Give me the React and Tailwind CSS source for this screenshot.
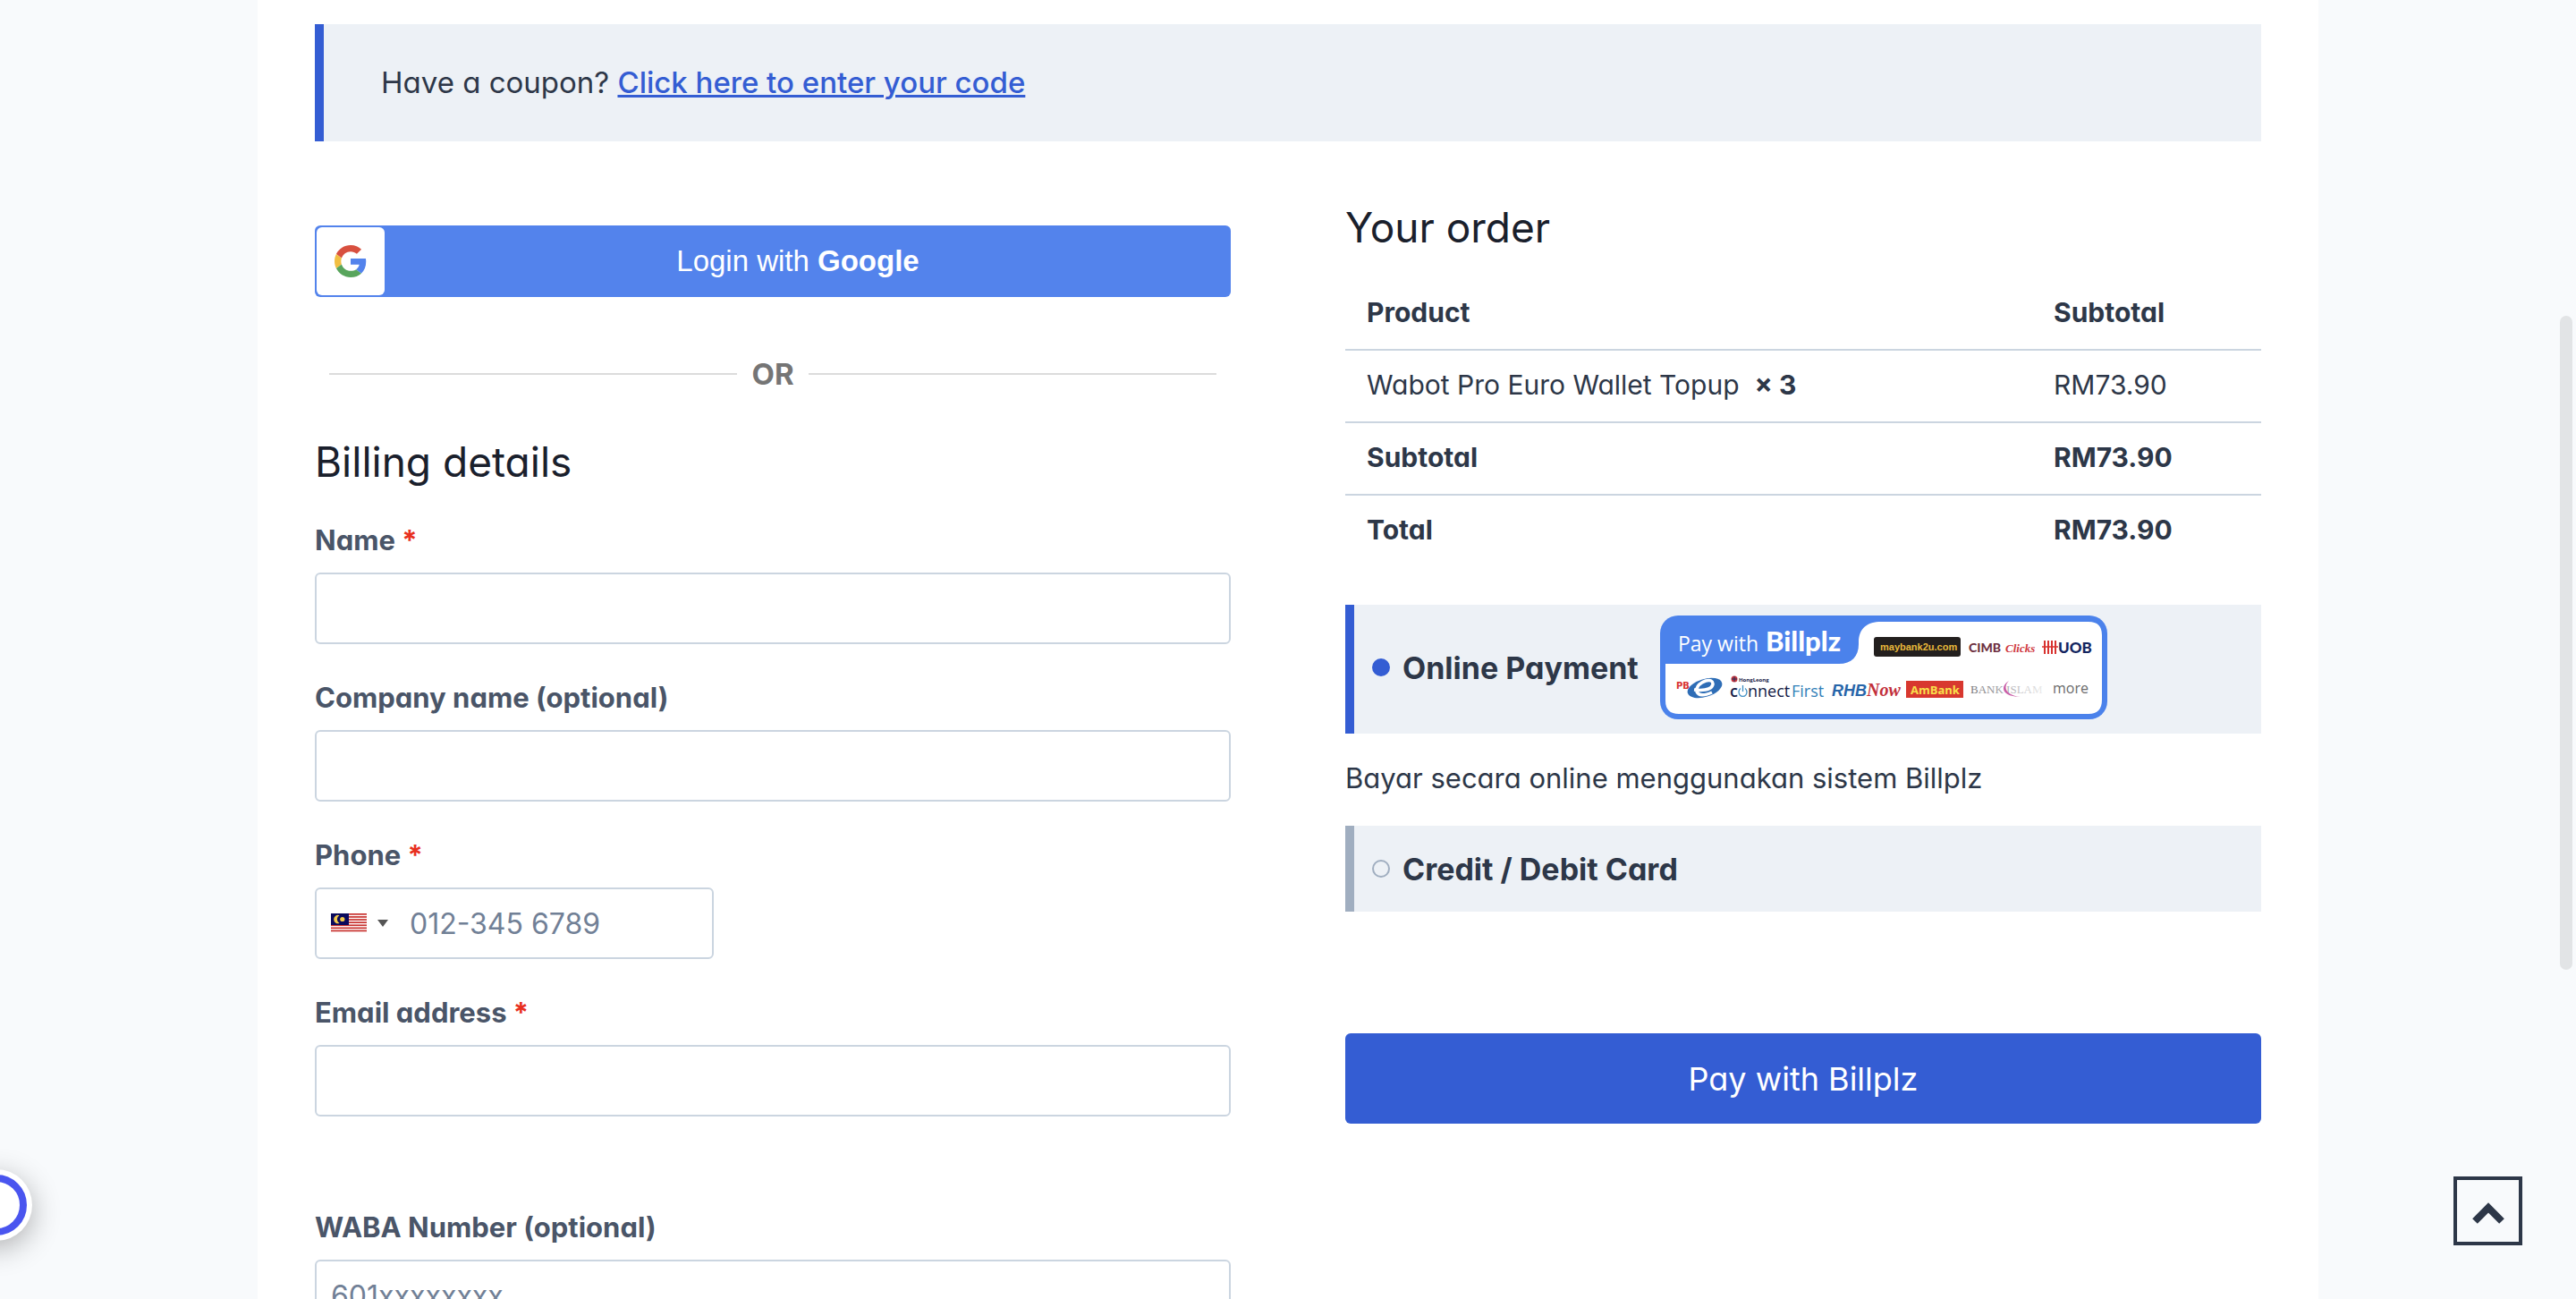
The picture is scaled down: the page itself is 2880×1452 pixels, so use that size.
import React from "react";

const GoogleIcon = () => (
  <svg viewBox="0 0 48 48" className="w-9 h-9" aria-hidden="true">
    <path fill="#d8503f" d="M24 9.5c3.54 0 6.71 1.22 9.21 3.6l6.85-6.85C35.9 2.38 30.47 0 24 0 14.62 0 6.51 5.38 2.56 13.22l7.98 6.19C12.43 13.72 17.74 9.5 24 9.5z" />
    <path fill="#5383ec" d="M46.98 24.55c0-1.57-.15-3.09-.38-4.55H24v9.02h12.94c-.58 2.96-2.26 5.48-4.78 7.18l7.73 6c4.51-4.18 7.09-10.36 7.09-17.65z" />
    <path fill="#f1be42" d="M10.53 28.59c-.48-1.45-.76-2.99-.76-4.59s.27-3.14.76-4.59l-7.98-6.19C.92 16.46 0 20.12 0 24c0 3.88.92 7.54 2.56 10.78l7.97-6.19z" />
    <path fill="#58a55c" d="M24 48c6.48 0 11.93-2.13 15.89-5.81l-7.73-6c-2.15 1.45-4.92 2.3-8.16 2.3-6.26 0-11.57-4.22-13.47-9.91l-7.98 6.19C6.51 42.62 14.62 48 24 48z" />
  </svg>
);

const MalaysiaFlag = () => (
  <svg viewBox="0 0 40 22" className="w-10 h-[22px]" aria-hidden="true">
    <rect width="40" height="22" fill="#fff" />
    {[0, 1, 2, 3, 4, 5, 6].map((i) => (
      <rect key={i} y={i * 3.1} width="40" height="1.7" fill="#c8322f" />
    ))}
    <rect width="20" height="13" fill="#0a0a5c" />
    <path d="M9.500 2.200a4.700 4.700 0 1 0 0 8.800 5 5 0 0 1 0-8.800z" fill="#f2c94c" />
    <circle cx="12.800" cy="6.500" r="2.600" fill="#f2c94c" />
  </svg>
);

// Banner with the Billplz tab and the supported banks
const BillplzBanner = () => (
  <svg viewBox="0 0 500 116" className="w-[500px] h-[116px] shrink-0 font-normal" role="img" aria-label="Pay with Billplz">
    <defs>
      <linearGradient id="islam" x1="0" x2="1">
        <stop offset="0" stopColor="#77777b" />
        <stop offset="0.6" stopColor="#b9b9bd" />
        <stop offset="1" stopColor="#ececec" />
      </linearGradient>
    </defs>
    <rect width="500" height="116" rx="20" fill="#4b82eb" />
    <path d="M6 54H200C214 54 222 46 222 32V30C222 14 232 7 247 7H479Q494 7 494 22V94Q494 110 479 110H21Q6 110 6 95Z" fill="#fff" />

    <text x="20" y="40" fontFamily="Open Sans" fontSize="23" fill="#fff">Pay with</text>
    <text x="118" y="40" fontFamily="Lato" fontSize="31" fontWeight="900" fill="#fff">Billplz</text>

    <rect x="239" y="24" width="97" height="22" rx="3" fill="#231f1e" />
    <text x="246" y="39" fontFamily="Liberation Sans" fontSize="11" fontWeight="700" fill="#e9b93a">maybank2u.com</text>

    <text x="345" y="41" fontFamily="Lato" fontSize="14" fontWeight="900" fill="#6d2f40">CIMB</text>
    <text x="386" y="41" fontFamily="Liberation Serif" fontSize="13" fontWeight="700" fontStyle="italic" fill="#cf3a3f">Clicks</text>

    <path d="M430 28V43M434 28V43M438 28V43M442 28V43" stroke="#d8322f" strokeWidth="2" />
    <path d="M427 35H445" stroke="#d8322f" strokeWidth="1.500" />
    <text x="445" y="42" fontFamily="Lato" fontSize="17" fontWeight="900" fill="#14255f">UOB</text>

    <ellipse cx="50" cy="81" rx="20" ry="10" transform="rotate(-17 50 81)" fill="#2e6db6" />
    <path d="M38 83Q57 85 59 77Q59 71 51 73Q40 77 41 85Q44 92 58 86" fill="none" stroke="#fff" strokeWidth="3.5" />
    <text x="18" y="82" fontFamily="DejaVu Sans" fontSize="10" fontWeight="700" fill="#d8322f">PB</text>

    <circle cx="83" cy="71" r="3.5" fill="#c9343c" />
    <path d="M80 71H86M83 68V74" stroke="#22315c" strokeWidth="1" />
    <text x="88" y="74" fontFamily="Open Sans" fontSize="6" fontWeight="700" fill="#1a2348">HongLeong</text>
    <text x="78" y="91" fontFamily="Open Sans" fontSize="18" fontWeight="600" fill="#141c46">c</text>
    <path d="M90 81.500A4.500 4.900 0 1 0 95 81.500M92.500 78V85" fill="none" stroke="#3f8fc4" strokeWidth="1.300" />
    <text x="98" y="91" fontFamily="Open Sans" fontSize="18" fill="#141c46">nnect</text>
    <text x="147" y="91" fontFamily="Open Sans" fontSize="18" fill="#3180b8">First</text>

    <text x="192" y="90" fontFamily="Liberation Sans" fontSize="18" fontWeight="700" fontStyle="italic" fill="#2765a9">RHB</text>
    <text x="231" y="90" fontFamily="Liberation Serif" fontSize="20" fontWeight="700" fontStyle="italic" fill="#c22f3a">Now</text>

    <rect x="275" y="73" width="64" height="19" fill="#d8382f" />
    <text x="280" y="88" fontFamily="Open Sans" fontSize="13" fontWeight="700" fill="#f8e04b">AmBank</text>

    <text x="347" y="87" fontFamily="Liberation Serif" fontSize="13" fill="url(#islam)">BANK ISLAM</text>
    <path d="M390 73C380 79 381 91 403 91C386 89 383 80 390 73Z" fill="#c95fa8" />

    <text x="439" y="87" fontFamily="Open Sans" fontSize="16" fill="#6b6b6b">more</text>
  </svg>
);

const Field = ({ id, label, required, type = "text", placeholder }) => (
  <div>
    <label htmlFor={id} className="block mb-4 text-[31px] leading-10 font-bold text-[#4a5568]">
      {label}
      {required && <span className="text-[#e8301f]"> *</span>}
    </label>
    <input
      id={id}
      type={type}
      placeholder={placeholder}
      className="block w-full h-20 px-4 bg-white border-2 border-[#cbd5e0] rounded-md text-[32px] placeholder:text-[#718096] outline-none"
    />
  </div>
);

const PhoneField = () => (
  <div>
    <label htmlFor="phone" className="block mb-4 text-[31px] leading-10 font-bold text-[#4a5568]">
      Phone<span className="text-[#e8301f]"> *</span>
    </label>
    <div className="flex items-center w-[446px] h-20 bg-white border-2 border-[#cbd5e0] rounded-md">
      <div className="relative flex items-center gap-3 h-full pl-4 pr-2">
        <MalaysiaFlag />
        <svg viewBox="0 0 12 8" className="w-3 h-2" aria-hidden="true">
          <path d="M0 0h12L6 8z" fill="#555" />
        </svg>
        <select aria-label="Country" defaultValue="MY" className="absolute inset-0 opacity-0">
          <option value="MY">Malaysia</option>
        </select>
      </div>
      <input
        id="phone"
        type="tel"
        placeholder="012-345 6789"
        className="flex-1 min-w-0 h-full pl-4 text-[32px] placeholder:text-[#718096] outline-none"
      />
    </div>
  </div>
);

const Billing = () => (
  <section className="pt-[26px]">
    <button className="flex items-center w-full h-20 p-0.5 bg-[#5383ec] rounded-md text-white">
      <span className="flex items-center justify-center w-[76px] h-full bg-white rounded-md">
        <GoogleIcon />
      </span>
      <span className="flex-1 pr-5 text-center text-[33px] font-['Liberation_Sans',sans-serif]">
        Login with <strong>Google</strong>
      </span>
    </button>

    <div className="flex items-center gap-4 mt-[62px] px-4 leading-[48px] text-[33px] font-bold text-[#757575]">
      <span className="flex-1 h-0.5 bg-[#dcdcdc]" />
      OR
      <span className="flex-1 h-0.5 bg-[#dcdcdc]" />
    </div>

    <h3 className="mt-[46px] text-[46px] leading-[56px] text-[#1a202c]">Billing details</h3>

    <div className="flex flex-col gap-10 mt-10">
      <Field id="name" label="Name" required />
      <Field id="company" label="Company name (optional)" />
      <PhoneField />
      <Field id="email" label="Email address" type="email" required />
    </div>
    <div className="mt-[104px]">
      <Field id="waba" label="WABA Number (optional)" placeholder="601xxxxxxxx" />
    </div>
  </section>
);

const OrderTable = () => (
  <table className="w-full mt-[29px] table-fixed text-left text-[30px] leading-10 [&_td]:px-6 [&_td]:pt-[18px] [&_td]:pb-[21px] [&_th]:px-6 [&_th]:pt-[18px] [&_th]:pb-[21px]">
    <thead>
      <tr className="border-b-2 border-[#cbd5e0]">
        <th className="w-3/4">Product</th>
        <th>Subtotal</th>
      </tr>
    </thead>
    <tbody>
      <tr className="border-b-2 border-[#cbd5e0]">
        <td>
          Wabot Pro Euro Wallet Topup&nbsp; <strong>× 3</strong>
        </td>
        <td>RM73.90</td>
      </tr>
    </tbody>
    <tfoot>
      <tr className="border-b-2 border-[#cbd5e0]">
        <th>Subtotal</th>
        <td className="font-bold">RM73.90</td>
      </tr>
      <tr>
        <th>Total</th>
        <td className="font-bold">RM73.90</td>
      </tr>
    </tfoot>
  </table>
);

const radioClass =
  "appearance-none shrink-0 w-5 h-5 rounded-full border-2 border-[#a0aec0] checked:border-[#345dd3] checked:bg-[#345dd3]";

const Order = () => (
  <section>
    <h3 className="text-[46px] leading-[56px] text-[#1a202c]">Your order</h3>
    <OrderTable />

    <div className="flex items-center h-36 mt-[43px] pl-5 pb-1 bg-[#edf1f6] border-l-[10px] border-[#345dd3]">
      <input id="pay-billplz" type="radio" name="payment" defaultChecked className={radioClass} />
      <label htmlFor="pay-billplz" className="flex items-center gap-6 pl-3.5 text-[34px] font-bold">
        Online Payment
        <BillplzBanner />
      </label>
    </div>
    <p className="mt-[30px] mb-[33px] text-[31px] leading-10">Bayar secara online menggunakan sistem Billplz</p>
    <div className="flex items-center h-24 pl-5 bg-[#edf1f6] border-l-[10px] border-[#a0aec0]">
      <input id="pay-card" type="radio" name="payment" className={radioClass} />
      <label htmlFor="pay-card" className="pl-3.5 text-[34px] font-bold">
        Credit / Debit Card
      </label>
    </div>

    <button className="block w-full h-[101px] mt-34 bg-[#345dd3] rounded-md text-white text-[36px]">
      Pay with Billplz
    </button>
  </section>
);

const App = () => (
  <div className="h-screen overflow-y-auto [scrollbar-width:none] bg-[#f8fafc] text-[#2d3748] font-[Inter,sans-serif] [font-feature-settings:'cv11']">
    <main className="w-4/5 mx-auto px-16 pt-[27px] pb-20 bg-white">
      <div className="flex items-center h-[131px] pl-16 bg-[#edf1f6] border-l-[10px] border-[#345dd3] text-[33px]">
        <p>
          Have a coupon?{" "}
          <a href="#coupon" className="font-medium text-[#345dd3] underline decoration-3">
            Click here to enter your code
          </a>
        </p>
      </div>

      <div className="grid grid-cols-2 gap-32 mt-17">
        <Billing />
        <Order />
      </div>
    </main>

    {/* Widget launcher, half off screen */}
    <button
      aria-label="Open widget"
      className="fixed -left-11 bottom-[65px] flex items-center justify-center w-20 h-20 rounded-full bg-white shadow-[0_8px_32px_rgba(0,0,0,0.3)]"
    >
      <span className="w-[68px] h-[68px] rounded-full border-8 border-[#4a55ef]" />
    </button>

    {/* Back to top */}
    <button
      aria-label="Back to top"
      className="fixed right-15 bottom-15 flex items-center justify-center w-[77px] h-[77px] pt-1 border-4 border-[#2d3748]"
    >
      <svg viewBox="0 0 36 24" className="w-9 h-6" fill="none" stroke="#2d3748" strokeWidth="8" strokeLinejoin="miter">
        <path d="M3 21L18 6L33 21" />
      </svg>
    </button>

    {/* Scroll thumb */}
    <div className="fixed right-1 top-[353px] w-3.5 h-[731px] rounded-full bg-[#e2e4e6]" />
  </div>
);

export default App;
